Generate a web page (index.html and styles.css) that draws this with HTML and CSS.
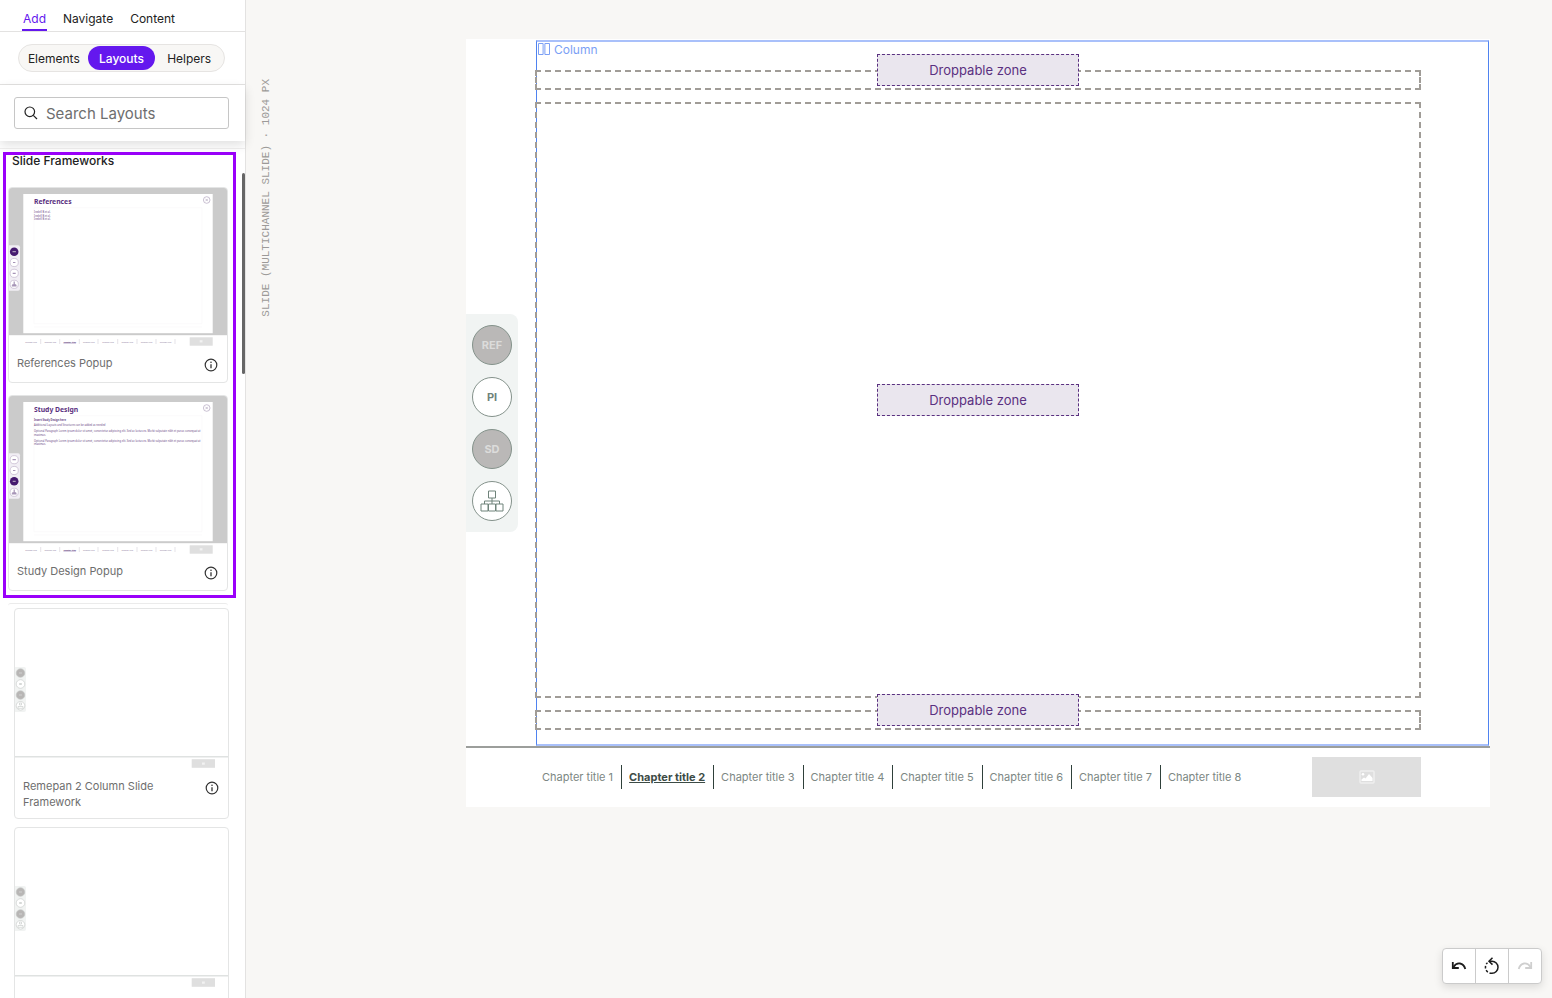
FILE: index.html
```
<!DOCTYPE html>
<html lang="en">

<head>
    <meta charset="UTF-8">
    <meta name="viewport" content="width=device-width, initial-scale=1.0">
    <title>Slide Editor</title>
    <link rel="stylesheet" href="styles.css">
</head>

<body>
    <svg class="sprite" aria-hidden="true">
        <symbol id="info" viewBox="0 0 14 14">
            <circle cx="7" cy="7" r="5.8" fill="none" stroke="#333" stroke-width="1.2" />
            <path d="M7 6.2v4" stroke="#333" stroke-width="1.3" />
            <circle cx="7" cy="4.2" r="0.8" fill="#333" />
        </symbol>
        <symbol id="sitemap" viewBox="0 0 24 22">
            <path d="M8.5 1h7v7h-7zM1 14h7v7H1zM8.5 14h7v7h-7zM16 14h7v7h-7zM12 8v6M4.5 14v-3h15v3" fill="none" stroke="currentColor" stroke-width="1" />
        </symbol>
        <symbol id="popup-frame" viewBox="0 0 2180 1580">
            <rect width="2180" height="1472" fill="#cbcbcb" />
            <rect x="143" y="60" width="1894" height="1392" fill="#fff" />
            <path d="M250 197h1680v1160H250zM250 1390h1680" fill="none" stroke="#f8f7f9" stroke-width="6" />
            <circle cx="1977" cy="120" r="33" fill="none" stroke="#b5a8c0" stroke-width="7" />
            <path d="M1965 108l24 24M1989 108l-24 24" stroke="#b5a8c0" stroke-width="7" />
            <path d="M0 573h90q20 0 20 20v414q0 20-20 20H0z" fill="#f1eef4" />
            <path d="M317 1510v50M507 1510v50M703 1510v50M890 1510v50M1087 1510v50M1280 1510v50M1470 1510v50M1660 1510v50" stroke="#d5d0d8" stroke-width="6" />
            <rect x="1807" y="1493" width="230" height="84" fill="#dfdfdf" />
            <rect x="1907" y="1522" width="28" height="22" fill="#f2f2f2" />
        </symbol>
        <symbol id="column-frame" viewBox="0 0 2130 1600">
            <path d="M0 580h90q20 0 20 20v410q0 20-20 20H0z" fill="#f1f3f2" />
            <g stroke="#c4c8c6" stroke-width="6">
                <circle cx="55" cy="640" r="43" fill="#b8b6b5" />
                <circle cx="55" cy="750" r="43" fill="#fff" />
                <circle cx="55" cy="860" r="43" fill="#b8b6b5" />
                <circle cx="55" cy="968" r="43" fill="#fff" />
            </g>
            <path d="M40 640h30M40 860h30" stroke="#d0d0d0" stroke-width="10" />
            <path d="M42 750h26" stroke="#c8ccca" stroke-width="14" />
            <path d="M45 940h20v20H45zM30 975h50v18H30z" fill="none" stroke="#c4c8c6" stroke-width="6" />
            <path d="M0 1478h2130" stroke="#dfe2e1" stroke-width="14" />
            <rect x="1767" y="1502" width="233" height="86" fill="#dfdfdf" />
            <rect x="1870" y="1535" width="28" height="22" fill="#f2f2f2" />
        </symbol>
    </svg>

    <aside class="sidebar">
        <nav class="tabs">
            <button class="tab active">Add</button>
            <button class="tab">Navigate</button>
            <button class="tab">Content</button>
        </nav>

        <div class="switcher">
            <div class="pills">
                <button class="pill">Elements</button>
                <button class="pill active">Layouts</button>
                <button class="pill">Helpers</button>
            </div>
        </div>

        <div class="search">
            <label class="search-box">
                <svg width="14" height="14" viewBox="0 0 14 14" aria-hidden="true">
                    <circle cx="5.8" cy="5.8" r="4.8" fill="none" stroke="#222" stroke-width="1.2" />
                    <path d="M9.3 9.3l3.7 3.7" stroke="#222" stroke-width="1.2" />
                </svg>
                <input type="text" placeholder="Search Layouts" aria-label="Search Layouts">
            </label>
        </div>

        <div class="layouts">
            <div class="list-top"></div>
            <section class="highlight">
                <h2 class="group-title">Slide Frameworks</h2>
                <div class="card">
                    <svg class="thumb" viewBox="0 0 2180 1580">
                        <use href="#popup-frame" />
                        <text x="250" y="164" class="tiny-title">References</text>
                        <g class="tiny-text">
                            <text x="250" y="250">Iredell B et al.</text>
                            <text x="250" y="288">Iredell B et al.</text>
                            <text x="250" y="324">Iredell B et al.</text>
                        </g>
                        <g class="tiny-text tiny-nav">
                            <text x="163" y="1545">Chapter title</text>
                            <text x="356" y="1545">Chapter title</text>
                            <text x="544" y="1545" class="tiny-current">Chapter title</text>
                            <text x="740" y="1545">Chapter title</text>
                            <text x="932" y="1545">Chapter title</text>
                            <text x="1124" y="1545">Chapter title</text>
                            <text x="1317" y="1545">Chapter title</text>
                            <text x="1508" y="1545">Chapter title</text>
                        </g>
                        <g stroke="#c3b6cd" stroke-width="7" fill="#fff">
                            <circle cx="52" cy="637" r="43" fill="#45196f" stroke="none" />
                            <circle cx="52" cy="745" r="41" />
                            <circle cx="52" cy="853" r="41" />
                            <circle cx="52" cy="963" r="41" />
                        </g>
                        <path d="M35 637h34M40 745h24M37 853h30" stroke="#a795b7" stroke-width="12" />
                        <path d="M52 935v30M28 978h48M32 968h40" stroke="#a795b7" stroke-width="12" />
                    </svg>
                    <div class="card-label">
                        <span>References Popup</span>
                        <svg class="info" role="img" aria-label="Info"><use href="#info" /></svg>
                    </div>
                </div>
                <div class="card">
                    <svg class="thumb" viewBox="0 0 2180 1580">
                        <use href="#popup-frame" />
                        <text x="250" y="164" class="tiny-title">Study Design</text>
                        <g class="tiny-text">
                            <text x="250" y="251" class="tiny-bold">Insert Study Design here</text>
                            <text x="250" y="298">Additional Layouts and Structures can be added as needed</text>
                            <text x="250" y="358">Optional Paragraph Lorem ipsum dolor sit amet, consectetur adipiscing elit. Sed ac luctus ex. Morbi vulputate nibh et purus consequat at</text>
                            <text x="250" y="395">maximus.</text>
                            <text x="250" y="457">Optional Paragraph Lorem ipsum dolor sit amet, consectetur adipiscing elit. Sed ac luctus ex. Morbi vulputate nibh et purus consequat at</text>
                            <text x="250" y="494">maximus.</text>
                        </g>
                        <g class="tiny-text tiny-nav">
                            <text x="163" y="1545">Chapter title</text>
                            <text x="356" y="1545">Chapter title</text>
                            <text x="544" y="1545" class="tiny-current">Chapter title</text>
                            <text x="740" y="1545">Chapter title</text>
                            <text x="932" y="1545">Chapter title</text>
                            <text x="1124" y="1545">Chapter title</text>
                            <text x="1317" y="1545">Chapter title</text>
                            <text x="1508" y="1545">Chapter title</text>
                        </g>
                        <g stroke="#c3b6cd" stroke-width="7" fill="#fff">
                            <circle cx="52" cy="637" r="41" />
                            <circle cx="52" cy="745" r="41" />
                            <circle cx="52" cy="853" r="43" fill="#45196f" stroke="none" />
                            <circle cx="52" cy="963" r="41" />
                        </g>
                        <path d="M35 637h34M40 745h24M37 853h30" stroke="#a795b7" stroke-width="12" />
                        <path d="M52 935v30M28 978h48M32 968h40" stroke="#a795b7" stroke-width="12" />
                    </svg>
                    <div class="card-label">
                        <span>Study Design Popup</span>
                        <svg class="info" role="img" aria-label="Info"><use href="#info" /></svg>
                    </div>
                </div>
            </section>

            <div class="card-edge"></div>

            <section class="card-list">
                <div class="card">
                    <svg class="thumb" viewBox="0 0 2130 1600"><use href="#column-frame" /></svg>
                    <div class="card-label">
                        <span>Remepan 2 Column Slide Framework</span>
                        <svg class="info" role="img" aria-label="Info"><use href="#info" /></svg>
                    </div>
                </div>
                <div class="card">
                    <svg class="thumb" viewBox="0 0 2130 1600"><use href="#column-frame" /></svg>
                    <div class="card-label"></div>
                </div>
            </section>
        </div>
        <div class="scroll-thumb"></div>
    </aside>

    <main class="canvas">
        <div class="gutter">
            <div class="slide-name">SLIDE (MULTICHANNEL SLIDE) · 1024 PX</div>
        </div>

        <div class="slide">
            <div class="slide-body">
                <div class="rail">
                    <div class="rail-buttons">
                        <button class="round visited">REF</button>
                        <button class="round">PI</button>
                        <button class="round visited">SD</button>
                        <button class="round" aria-label="Sitemap">
                            <svg width="24" height="22"><use href="#sitemap" /></svg>
                        </button>
                    </div>
                </div>
                <div class="column">
                    <div class="column-tag">
                        <svg width="12" height="12" viewBox="0 0 12 12" aria-hidden="true">
                            <path d="M.5.5h4.6v11H.5zM6.9.5h4.6v11H6.9z" fill="none" stroke="#7b9ff5" />
                        </svg>
                        Column
                    </div>
                    <div class="zone"><span class="drop">Droppable zone</span></div>
                    <div class="zone zone-main"><span class="drop">Droppable zone</span></div>
                    <div class="zone"><span class="drop">Droppable zone</span></div>
                </div>
            </div>
            <footer class="slide-footer">
                <nav class="chapters">
                    <a href="#">Chapter title 1</a>
                    <a href="#" class="current">Chapter title 2</a>
                    <a href="#">Chapter title 3</a>
                    <a href="#">Chapter title 4</a>
                    <a href="#">Chapter title 5</a>
                    <a href="#">Chapter title 6</a>
                    <a href="#">Chapter title 7</a>
                    <a href="#">Chapter title 8</a>
                </nav>
                <div class="picture">
                    <svg width="16" height="14" viewBox="0 0 16 14" aria-hidden="true">
                        <rect x="1" y="1" width="14" height="12" rx="1" fill="none" stroke="#efefef" stroke-width="1.4" />
                        <circle cx="4" cy="4.2" r="1.3" fill="#fff" />
                        <path d="M2.5 11V9.5L5 7.5l1.5 1L10 4l3.5 4v3z" fill="#fff" />
                    </svg>
                </div>
            </footer>
        </div>
    </main>

    <div class="history">
        <button aria-label="Undo">
            <svg width="16" height="16" viewBox="0 0 16 16">
                <path d="M2.5 9C6 3.500 12.500 4.500 14.300 11" fill="none" stroke="#1d1d1d" stroke-width="1.8" />
                <path d="M1.800 4v6h6" fill="none" stroke="#1d1d1d" stroke-width="1.8" />
            </svg>
        </button>
        <button aria-label="Reset">
            <svg width="16" height="18" viewBox="0 0 16 18">
                <path d="M5.500 4.200H8a6 6 0 0 1 0 12" fill="none" stroke="#1d1d1d" stroke-width="1.500" />
                <path d="M8 16.200a6 6 0 0 1-4.500-10.500" fill="none" stroke="#1d1d1d" stroke-width="1.500" stroke-dasharray="2.500 1.800" />
                <path d="M8.500 .8L5 4.200 8.500 7.600" fill="none" stroke="#1d1d1d" stroke-width="1.500" />
            </svg>
        </button>
        <button aria-label="Redo" disabled>
            <svg width="16" height="16" viewBox="0 0 16 16">
                <path d="M13.500 9C10 3.500 3.500 4.500 1.700 11" fill="none" stroke="#cfcfcf" stroke-width="1.8" />
                <path d="M14.200 4v6h-6" fill="none" stroke="#cfcfcf" stroke-width="1.8" />
            </svg>
        </button>
    </div>
</body>

</html>
```
FILE: styles.css
```
* {
    box-sizing: border-box;
}

body {
    margin: 0;
    display: flex;
    height: 100vh;
    overflow: hidden;
    background: #f8f7f5;
    color: #222;
    font-family: Inter, "Open Sans", sans-serif;
    font-size: 12px;
}

button {
    margin: 0;
    padding: 0;
    border: none;
    background: none;
    color: inherit;
    font: inherit;
    cursor: pointer;
}

.sprite {
    position: absolute;
    width: 0;
    height: 0;
}

/* sidebar */
.sidebar {
    position: relative;
    flex: none;
    display: flex;
    flex-direction: column;
    width: 246px;
    background: #fff;
    border-right: 1px solid #e3e2e1;
}

.tabs {
    display: flex;
    gap: 15px;
    height: 32px;
    padding: 8px 22px 0;
    border-bottom: 1px solid #e3e2e1;
}

.tab {
    height: 23px;
    padding: 0 1px;
    line-height: 22px;
    border-bottom: 2px solid transparent;
}

.tab.active {
    color: #6418ee;
    border-color: #6418ee;
}

.switcher {
    padding: 12px 20px 12px 18px;
    border-bottom: 1px solid #e3e2e1;
}

.pills {
    display: flex;
    height: 28px;
    padding: 1px;
    border: 1px solid #e6e4e2;
    border-radius: 14px;
    background: #f8f7f5;
}

.pill {
    flex: 1;
    border-radius: 12px;
}

.pill.active {
    background: #6418ee;
    color: #fff;
    font-weight: 500;
}

.search {
    z-index: 1;
    padding: 12px 16px 12px 14px;
    background: #fff;
    box-shadow: 0 4px 10px rgba(0, 0, 0, 0.12);
}

.search-box {
    display: flex;
    align-items: center;
    gap: 8px;
    height: 32px;
    padding: 0 9px;
    border: 1px solid #c6c6c6;
    border-radius: 3px;
}

.search-box input {
    flex: 1;
    min-width: 0;
    padding: 0;
    border: none;
    outline: none;
    font: inherit;
    font-size: 15px;
}

.search-box input::placeholder {
    color: #6e6e6e;
    opacity: 1;
}

.layouts {
    flex: 1;
    min-height: 0;
    overflow: hidden;
    padding-top: 7px;
}

.list-top {
    height: 4px;
    border-top: 1px solid #f0efef;
}

.highlight {
    display: flex;
    flex-direction: column;
    gap: 12px;
    margin: 0 9px 0 3px;
    padding: 0 5px 4px 2px;
    border: 3px solid #9a00fa;
}

.group-title {
    margin: 0 0 8px 4px;
    font-size: 12px;
    line-height: 12px;
    font-weight: 500;
}

.card {
    border: 1px solid #e4e5e5;
    border-radius: 4px;
    overflow: hidden;
    background: #fff;
}

.thumb {
    display: block;
    width: 100%;
}

.card-label {
    display: flex;
    align-items: flex-start;
    justify-content: space-between;
    min-height: 36px;
    padding: 9px 9px 8px 8px;
    color: #6e6e6e;
    font-size: 11px;
    line-height: 16px;
}

.card-label span {
    max-width: 150px;
}

.info {
    flex: none;
    width: 14px;
    height: 14px;
    margin-top: 3px;
}

.card-edge {
    height: 3px;
    margin: 5px 17px 2px 8px;
    border-top: 1px solid #ebebeb;
    border-radius: 4px 4px 0 0;
}

.card-list {
    display: flex;
    flex-direction: column;
    gap: 8px;
    padding: 0 16px 0 14px;
}

.scroll-thumb {
    position: absolute;
    top: 173px;
    right: 0;
    width: 3px;
    height: 201px;
    border-radius: 2px;
    background: #666;
}

/* text inside the thumbnails, one unit is a tenth of a pixel */
.tiny-text {
    font-family: "Noto Sans", sans-serif;
    font-size: 26px;
    fill: #6d4b88;
}

.tiny-nav {
    font-size: 20px;
    fill: #8d7b9c;
}

.tiny-bold {
    font-weight: 700;
}

.tiny-current {
    font-weight: 700;
    fill: #45196f;
    text-decoration: underline;
}

.tiny-title {
    font-family: "Noto Sans", sans-serif;
    font-size: 68px;
    font-weight: 700;
    fill: #5a3080;
}

/* canvas */
.canvas {
    flex: 1;
    display: flex;
    align-items: flex-start;
    min-width: 0;
    padding: 39px 62px 0 12px;
}

.gutter {
    flex: none;
    display: flex;
    width: 208px;
    padding-top: 40px;
}

.slide-name {
    writing-mode: vertical-rl;
    transform: rotate(180deg);
    color: #9c9a98;
    font-family: "Liberation Mono", monospace;
    font-size: 11px;
    line-height: 16px;
    white-space: nowrap;
}

.slide {
    flex: 1;
    display: flex;
    flex-direction: column;
    min-width: 0;
    aspect-ratio: 4 / 3;
    background: #fff;
}

.slide-body {
    flex: 1;
    display: flex;
    padding: 1px 1px 0 0;
    border-bottom: 2px solid #9c9e9b;
}

.rail {
    display: flex;
    align-items: center;
    width: 70px;
    padding-top: 60px;
}

.rail-buttons {
    display: flex;
    flex-direction: column;
    gap: 12px;
    padding: 11px 6px;
    border-radius: 0 8px 8px 0;
    background: #f1f4f3;
}

.round {
    display: flex;
    align-items: center;
    justify-content: center;
    width: 40px;
    height: 40px;
    border: 1px solid #84928b;
    border-radius: 50%;
    background: #fff;
    color: #6f837a;
    font-size: 11px;
    font-weight: 700;
}

.round.visited {
    background: #bab8b7;
    color: #dcdcdb;
}

.column {
    flex: 1;
    display: flex;
    flex-direction: column;
    gap: 12px;
    padding: 0 67px 14px 0;
    border: 1px solid #4f83f0;
    border-top: 2px solid #a9c0fa;
    border-bottom: 2px solid #a9c0fa;
}

.column-tag {
    display: flex;
    align-items: center;
    gap: 4px;
    height: 14px;
    margin-bottom: 2px;
    padding-left: 1px;
    color: #7b9ff5;
}

.zone {
    position: relative;
    height: 20px;
    margin-left: -2px;
    border: 2px dashed #a09c97;
}

.zone-main {
    flex: 1;
}

.drop {
    position: absolute;
    top: -2px;
    left: 50%;
    z-index: 1;
    width: 202px;
    border: 1px dashed #5a3080;
    background: #eae6ee;
    color: #5a3080;
    font-size: 13px;
    line-height: 30px;
    text-align: center;
    transform: translate(-50%, -50%);
}

.zone-main .drop {
    top: 50%;
}

.slide-footer {
    display: flex;
    align-items: center;
    justify-content: space-between;
    height: 59px;
    padding: 0 69px 2px;
}

.chapters {
    display: flex;
}

.chapters a {
    padding: 0 8px 0 7px;
    border-right: 1px solid #2f403a;
    color: #7c8783;
    font-size: 11px;
    line-height: 24px;
    text-decoration: none;
    white-space: nowrap;
}

.chapters a:last-child {
    border-right: none;
}

.chapters .current {
    color: #3c4b45;
    font-weight: 700;
    text-decoration: underline;
}

.picture {
    display: flex;
    align-items: center;
    justify-content: center;
    width: 109px;
    height: 40px;
    background: #dfdfdf;
}

.history {
    position: fixed;
    right: 10px;
    bottom: 14px;
    display: flex;
    border: 1px solid #cbcbcb;
    border-radius: 4px;
    background: #fff;
    box-shadow: 0 3px 8px rgba(0, 0, 0, 0.12);
}

.history button {
    display: flex;
    align-items: center;
    justify-content: center;
    width: 33px;
    height: 34px;
    border-left: 1px solid #cbcbcb;
}

.history button:first-child {
    width: 32px;
    border-left: none;
}
```
